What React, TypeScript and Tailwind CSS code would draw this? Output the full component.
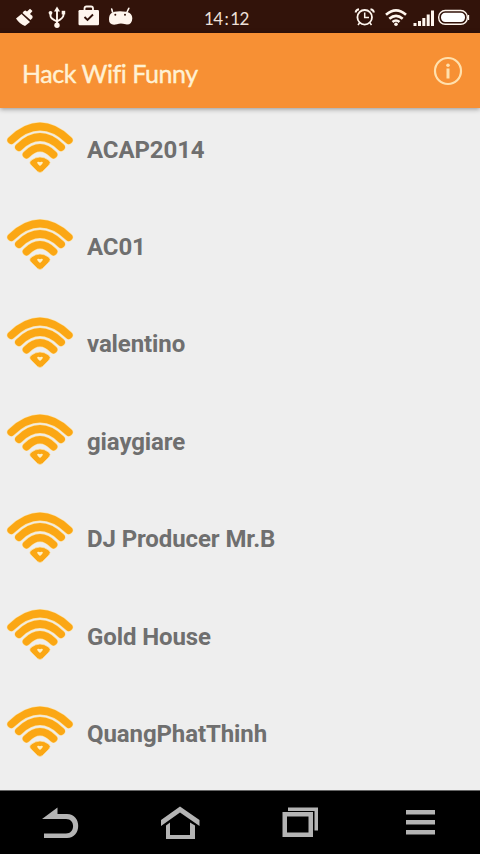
import { ReactNode } from 'react';

const networks = ['ACAP2014', 'AC01', 'valentino', 'giaygiare', 'DJ Producer Mr.B', 'Gold House', 'QuangPhatThinh'];

function WifiBadge() {
  return (
    <svg width="68" height="52" viewBox="0 0 68 52" fill="none" strokeLinecap="round" className="shrink-0">
      <g stroke="#fbe3ae" strokeWidth="9">
        <path d="M5.2 18.2Q34 -9 62.8 18.2" />
        <path d="M12.9 25.2Q34 5 55.1 25.2" />
        <path d="M20.5 32.6Q34 19 47.5 32.6" />
      </g>
      <g stroke="#fba714" strokeWidth="7.6">
        <path d="M5.2 18.2Q34 -9 62.8 18.2" />
        <path d="M12.9 25.2Q34 5 55.1 25.2" />
        <path d="M20.5 32.6Q34 19 47.5 32.6" />
      </g>
      <path d="M25.5 38Q34 32 42.5 38Q45.6 40.5 43 43L36.5 49.5Q34 51.6 31.5 49.5L25 43Q22.4 40.5 25.5 38Z" fill="#fba714" stroke="#fbe3ae" strokeWidth=".7" />
      <path d="M31.3 40Q32.8 39.2 34 40.2Q35.2 39.2 36.7 40Q37.3 41.5 34 44Q30.7 41.5 31.3 40Z" fill="#fff0c4" />
    </svg>
  );
}

function StatusBar() {
  return (
    <div className="flex h-[33px] items-center bg-[#32130a] text-[#fff6ee]">
      <svg width="136" height="33" fill="none" stroke="currentColor">
        {/* cleaner brush */}
        <path d="M16 18.5L21.5 14L30 22L25 26Q19.5 24 16 18.5Z" fill="currentColor" stroke="none" />
        <path d="M22.5 13L24 11L25.5 10.5L27 11.5L30 8.8L32.5 11L30 14L32.5 16V18L30.5 20Z" fill="currentColor" stroke="none" />
        {/* usb */}
        <path d="M57 10V25M50.5 12V16Q50.5 18.5 57 21.5Q63.5 18 63.5 15V12" strokeWidth="1.9" />
        <path d="M54 11.5L57 6.5L60 11.5Z" fill="currentColor" stroke="none" />
        <circle cx="50.5" cy="12.8" r="1.9" fill="currentColor" stroke="none" />
        <path d="M61.7 10.8H65.2V14.4H61.7Z" fill="currentColor" stroke="none" />
        <circle cx="57" cy="25.3" r="2.7" fill="currentColor" stroke="none" />
        {/* app updates bag */}
        <rect x="78.5" y="10" width="20.5" height="15.2" rx="1.2" fill="currentColor" stroke="none" />
        <path d="M84.5 10V8.5Q84.5 6.5 86.5 6.5H91Q93 6.5 93 8.5V10" strokeWidth="1.8" />
        <path d="M84.5 17L87.5 20L93 14.5" stroke="#32130a" strokeWidth="1.9" />
        {/* droid */}
        <path d="M112.5 12L111.7 9M127 12L128.8 8.3" strokeWidth="1.6" strokeLinecap="round" />
        <path d="M111 13.5Q113.5 11.2 120 11.2Q127 11.2 129.5 13Q132.3 14.5 132.3 18.5Q132 24.5 127 24.5L123 23.8Q120 23.2 117 24.3Q109 26 109 19.5Q109 15 111 13.5Z" fill="currentColor" stroke="none" />
        <circle cx="115.3" cy="14.8" r="1" fill="#32130a" stroke="none" />
        <circle cx="125" cy="14.8" r="1" fill="#32130a" stroke="none" />
      </svg>
      <span className="ml-[68px] pt-[3px] font-['Lato',sans-serif] text-[17px] leading-none tracking-[-0.6px] whitespace-nowrap text-[#eee0d8]">14<span className="px-[2px]">:</span>12</span>
      <svg width="130" height="33" viewBox="350 0 130 33" fill="none" stroke="currentColor" className="ml-auto">
        {/* alarm */}
        <circle cx="364.7" cy="17.3" r="7.3" strokeWidth="1.8" />
        <path d="M364.7 12.5V17.5H369M359.5 23L358 25M370 23L371.5 25" strokeWidth="1.5" />
        <path d="M355.7 12.5Q355.7 9.7 359 9.2M370.5 9.2Q373.8 9.7 373.8 12.5" strokeWidth="2" />
        {/* wifi */}
        <path d="M386 14.8Q396 5.8 406 14.8M389.3 18.8Q396 12.8 402.7 18.8M392.5 22Q396 19 399.5 22" strokeWidth="2.6" />
        <circle cx="396" cy="24.2" r="1.8" fill="currentColor" stroke="none" />
        {/* signal */}
        <path d="M415 23V26M419.5 21V26M423.8 18V26M428.2 14.5V26M432.5 10.5V26" strokeWidth="3" />
        {/* battery */}
        <rect x="438.7" y="10.5" width="28.6" height="13.8" rx="6.5" strokeWidth="1.4" />
        <rect x="441" y="12.8" width="24" height="9.2" rx="4.2" fill="#fff" stroke="none" />
        <path d="M468.4 15V20" strokeWidth="1.5" />
      </svg>
    </div>
  );
}

function Header() {
  return (
    <header className="flex h-[75px] items-center justify-between bg-[#f79034] pr-[17px] pl-[22px] shadow-[0_1px_5px_rgba(0,0,0,0.4)]">
      <h1 className="pt-[5px] font-['Lato',sans-serif] text-[25px] leading-none tracking-[-0.45px] text-[#fff1d3] [-webkit-text-stroke:0.4px_#fff1d3]">Hack Wifi Funny</h1>
      <svg width="30" height="30" fill="none" className="text-[#ffe0ad]">
        <circle cx="15" cy="15" r="13" stroke="currentColor" strokeWidth="2.2" />
        <path d="M15 12.5V22.5" stroke="currentColor" strokeWidth="3" />
        <circle cx="15" cy="9.2" r="1.8" fill="currentColor" />
      </svg>
    </header>
  );
}

function NavButton({ children }: { children: ReactNode }) {
  return (
    <button className="flex flex-1 items-center justify-center">
      <svg width="44" height="36" fill="#b4b4b4">
        {children}
      </svg>
    </button>
  );
}

function NavBar() {
  return (
    <nav className="flex h-[64px] border-t border-[#666] bg-black">
      <NavButton>
        <path d="M4 14L19.5 2.5V9H29C44 9 44 33 29 33H6V28.5H28C37.5 28.5 37.5 14 28 14H4Z" />
      </NavButton>
      <NavButton>
        <path d="M22 1.5L41.5 15V21L22 7.5L3 21V15Z" />
        <path d="M8 20.5L12 17.5V30H32V17.5L37 20.5V34H8Z" />
      </NavButton>
      <NavButton>
        <path d="M4.5 7H35V32H4.5ZM9 11.5V27.5H30.5V11.5Z" fillRule="evenodd" />
        <path d="M10 2.5H40V25.5H36.5V6H10Z" />
      </NavButton>
      <NavButton>
        <path d="M8 5H37V9.5H8ZM8 15H37V19.5H8ZM8 25H37V29.5H8Z" />
      </NavButton>
    </nav>
  );
}

export default function App() {
  return (
    <div className="flex h-[854px] w-[480px] flex-col overflow-hidden bg-[#eeeeee]">
      <StatusBar />
      <Header />
      <ul className="min-h-0 flex-1 overflow-hidden pt-[14px]">
        {networks.map((name) => (
          <li key={name} className="flex h-[97.4px] items-start pl-[6px]">
            <WifiBadge />
            <span className="pt-[12.6px] pl-[13px] font-['Roboto',sans-serif] text-[24px] leading-[30px] font-bold tracking-[-0.1px] text-[#6f6f6f]">{name}</span>
          </li>
        ))}
      </ul>
      <NavBar />
    </div>
  );
}
